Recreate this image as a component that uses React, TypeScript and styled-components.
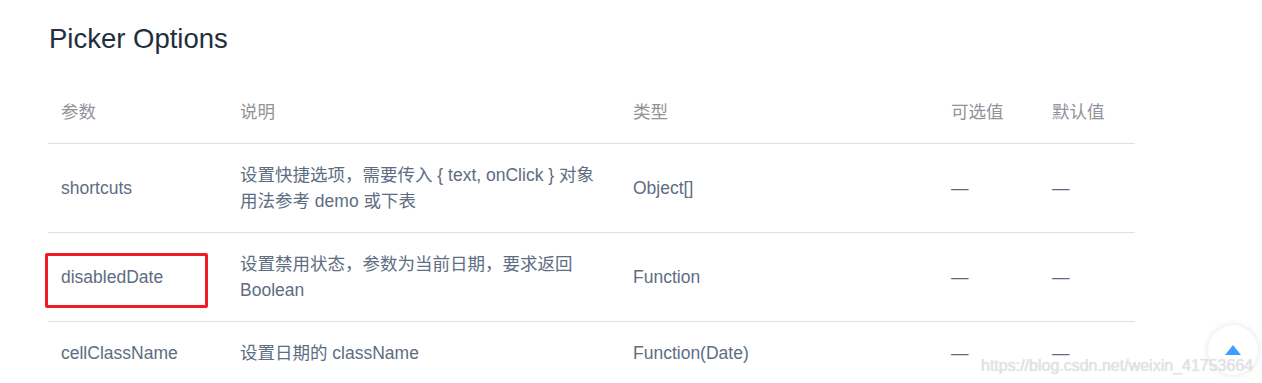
import styled, { createGlobalStyle } from 'styled-components'

const GlobalStyle = createGlobalStyle`
    html, body {
        margin: 0;
        padding: 0;
        background: #fff;
    }
    body {
        font-family: "Liberation Sans", "Noto Sans CJK SC", Arial, sans-serif;
        overflow: hidden;
    }
`

interface Row {
    name: string
    desc: string[]
    type: string
    marked?: boolean
}

const columns = [
    { title: '参数', width: 179 },
    { title: '说明', width: 393 },
    { title: '类型', width: 318 },
    { title: '可选值', width: 101 },
    { title: '默认值', width: 96 },
]

const rows: Row[] = [
    { name: 'shortcuts', desc: ['设置快捷选项，需要传入 { text, onClick } 对象', '用法参考 demo 或下表'], type: 'Object[]' },
    { name: 'disabledDate', desc: ['设置禁用状态，参数为当前日期，要求返回', 'Boolean'], type: 'Function', marked: true },
    { name: 'cellClassName', desc: ['设置日期的 className'], type: 'Function(Date)' },
]

const App = () => {
    return (
        <Page>
            <GlobalStyle />
            <Title>Picker Options</Title>
            <Table>
                <colgroup>
                    {columns.map((c) => <col key={c.title} style={{ width: c.width }} />)}
                </colgroup>
                <thead>
                    <tr>
                        {columns.map((c) => <Th key={c.title}>{c.title}</Th>)}
                    </tr>
                </thead>
                <tbody>
                    {rows.map((r) => (
                        <tr key={r.name}>
                            <Td>
                                {r.name}
                                {r.marked && <Mark />}
                            </Td>
                            <Td>
                                {r.desc.map((line) => <Line key={line}>{line}</Line>)}
                            </Td>
                            <Td>{r.type}</Td>
                            <Td>—</Td>
                            <Td>—</Td>
                        </tr>
                    ))}
                </tbody>
            </Table>
            <BackTop>
                <svg width="16" height="10" viewBox="0 0 16 10">
                    <path d="M8 0L16 10H0Z" fill="#409eff" />
                </svg>
            </BackTop>
            <Watermark>https://blog.csdn.net/weixin_41753664</Watermark>
        </Page>
    )
}

export default App

const Page = styled.div`
    position: relative;
    width: 1262px;
    height: 383px;
    padding: 0 0 0 48px;
    box-sizing: border-box;
    overflow: hidden;
`
const Title = styled.h3`
    margin: 0;
    padding-top: 20px;
    height: 81px;
    box-sizing: border-box;
    font-size: 27.5px;
    font-weight: 400;
    line-height: 38px;
    color: #1f2f3d;
    padding-left: 1px;
`
const Table = styled.table`
    width: 1087px;
    table-layout: fixed;
    border-collapse: collapse;
    font-size: 17.5px;
    line-height: 26px;
`
const Th = styled.th`
    text-align: left;
    font-weight: 400;
    color: #909399;
    padding: 18px 13px;
    border-bottom: 1px solid #dcdfe6;
    white-space: nowrap;
`
const Td = styled.td`
    position: relative;
    color: #5e6d82;
    padding: 18px 13px;
    border-bottom: 1px solid #dcdfe6;
    white-space: nowrap;
    vertical-align: middle;
`
const Line = styled.div`
    white-space: nowrap;
`
const Mark = styled.span`
    position: absolute;
    left: -3px;
    top: 20px;
    width: 163px;
    height: 55px;
    box-sizing: border-box;
    border: 3px solid #ee1c25;
    border-radius: 2px;
`
const Watermark = styled.div`
    position: absolute;
    left: 981px;
    top: 357px;
    font-family: "Liberation Sans", Arial, sans-serif;
    font-size: 16px;
    line-height: 18px;
    color: #e4e4e4;
    text-shadow: 0 0 1px rgba(0, 0, 0, 0.18);
    white-space: nowrap;
`
const BackTop = styled.div`
    position: absolute;
    left: 1208px;
    top: 325px;
    width: 50px;
    height: 50px;
    border-radius: 50%;
    background: #fff;
    box-shadow: 0 0 6px rgba(0, 0, 0, 0.12);
    display: flex;
    align-items: center;
    justify-content: center;
    svg {
        margin-top: -1px;
    }
`
